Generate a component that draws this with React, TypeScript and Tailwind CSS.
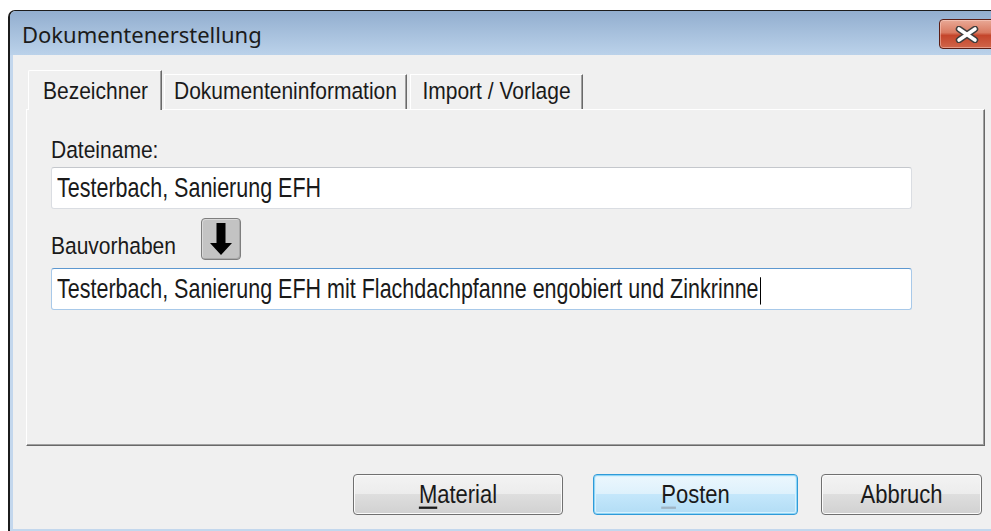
import type { ReactNode } from "react";

const tabs = [
  { label: "Bezeichner", cls: "w-[134px] h-[40px] ml-[2px] -mb-px relative z-10" },
  { label: "Dokumenteninformation", cls: "w-[243px] h-[35px] ml-[2px]" },
  { label: "Import / Vorlage", cls: "w-[173px] h-[35px] ml-[3px]" },
];

function Stretch({ children, className = "" }: { children: ReactNode; className?: string }) {
  return <span className={`inline-block scale-y-[1.15] ${className}`}>{children}</span>;
}

function CloseButton() {
  // runs past the right edge of the page, like a window pushed off screen
  return (
    <div className="ml-auto -mr-[8px] self-start mt-[8px] w-[60px] h-[30px] rounded-[4px] border border-[#5a1d14] bg-[linear-gradient(to_bottom,#e9a996_0%,#d97a61_45%,#c4452b_55%,#d0654a_100%)] shadow-[inset_0_0_0_1px_rgba(255,220,210,0.45)] flex items-center justify-center">
      <svg width="26" height="17" viewBox="0 0 26 17" className="-ml-[4px]">
        <path d="M5 3 L21 14 M21 3 L5 14" stroke="#3e3e3e" strokeWidth="6.5" strokeLinecap="round" />
        <path d="M5 3 L21 14 M21 3 L5 14" stroke="#ffffff" strokeWidth="3.6" strokeLinecap="round" />
      </svg>
    </div>
  );
}

function DialogButton({
  children,
  width,
  isDefault = false,
}: {
  children: ReactNode;
  width: string;
  isDefault?: boolean;
}) {
  const look = isDefault
    ? "border-[#2f9ad8] bg-[linear-gradient(to_bottom,#ecf7fd_0%,#ddf1fc_50%,#c4e7fb_50%,#b2ddf5_100%)] shadow-[inset_0_0_0_1px_#8fd5f6,inset_0_0_0_2px_#d8f1fd]"
    : "border-[#707070] bg-[linear-gradient(to_bottom,#f3f3f3_0%,#ececec_50%,#dedede_50%,#d1d1d1_100%)] shadow-[inset_0_0_0_1px_#fbfbfb]";
  return (
    <div className={`${width} h-[41px] rounded-[4px] border flex items-center justify-center text-[22px] text-[#1a1a1a] ${look}`}>
      <Stretch>{children}</Stretch>
    </div>
  );
}

function TextBox({ children, focused = false }: { children: ReactNode; focused?: boolean }) {
  const edge = focused
    ? "border-[#a8c9e9] border-t-[#5d98d0] bg-white"
    : "border-[#dadde2] border-t-[#c4c7cc] bg-white";
  return (
    <div className={`w-[861px] h-[42px] rounded-[3px] border flex items-center pl-[5px] text-[21.5px] text-[#1a1a1a] ${edge}`}>
      <span className="inline-block scale-y-[1.3] whitespace-nowrap">{children}</span>
    </div>
  );
}

export default function App() {
  return (
    <div className="w-[991px] h-[531px] overflow-hidden bg-white pt-[10px] pl-[8px] font-['Liberation_Sans',Arial,sans-serif] text-[21px] text-[#1a1a1a]">
      <div className="h-full flex flex-col rounded-tl-[7px] border-l-2 border-t border-[#1c1c1c] bg-[#c3d7ed]">
        {/* Title bar */}
        <div className="h-[44px] shrink-0 flex items-center rounded-tl-[6px] bg-[linear-gradient(to_bottom,#92aecf,#bbd2ea)] pl-[12px]">
          <span className="font-['Noto_Sans',sans-serif] text-[22px] leading-none text-[#1b1b1b] mt-[2px]">
            Dokumentenerstellung
          </span>
          <CloseButton />
        </div>

        {/* Client area */}
        <div className="flex-1 ml-[3px] mb-[2px] bg-[#f0f0f0] flex flex-col pt-[15px]">
          {/* Tabs */}
          <div className="ml-[13px] flex items-end h-[39px]">
            {tabs.map((tab, i) => (
              <div
                key={tab.label}
                className={`${tab.cls} bg-[#f0f0f0] border-l border-t border-r border-l-white border-t-white border-r-[#696969] shadow-[inset_-1px_0_0_#a0a0a0] ${
                  i === 0 ? "rounded-tl-[2px] pl-[14px]" : "justify-center"
                } flex items-center`}
              >
                <Stretch className={i === 0 ? "" : "mt-[-3px]"}>{tab.label}</Stretch>
              </div>
            ))}
          </div>

          {/* Tab page */}
          <div className="ml-[13px] mr-[6px] h-[337px] border border-l-white border-t-white border-r-[#696969] border-b-[#696969] shadow-[inset_-1px_-1px_0_#a0a0a0] pl-[24px] pt-[26px] flex flex-col">
            <div className="h-[28px] leading-[28px]">
              <Stretch>Dateiname:</Stretch>
            </div>
            <div className="mt-[3px]">
              <TextBox>Testerbach, Sanierung EFH</TextBox>
            </div>

            <div className="mt-[9px] h-[42px] flex items-end">
              <div className="h-[28px] leading-[28px]">
                <Stretch>Bauvorhaben</Stretch>
              </div>
              <div className="ml-[25px] w-[40px] h-[42px] rounded-[4px] border border-[#7e7e7e] bg-[#c3c3c3] shadow-[inset_1px_1px_0_#d9d9d9,inset_-1px_-1px_0_#a9a9a9] flex items-start justify-center">
                <svg width="24" height="34" viewBox="0 0 24 34" className="mt-[4px]">
                  <path d="M7.5 0 H16.5 V20 H23 L12 32 L1 20 H7.5 Z" fill="#000" />
                </svg>
              </div>
            </div>

            <div className="mt-[8px]">
              <TextBox focused>
                Testerbach, Sanierung EFH mit Flachdachpfanne engobiert und Zinkrinne
                <span className="inline-block w-px h-[21px] bg-black align-middle ml-px" />
              </TextBox>
            </div>
          </div>

          {/* Dialog buttons */}
          <div className="mt-[28px] flex justify-end pr-[9px]">
            <DialogButton width="w-[210px]">
              <span className="underline underline-offset-[3px]">M</span>aterial
            </DialogButton>
            <div className="ml-[30px]">
              <DialogButton width="w-[205px]" isDefault>
                <span className="underline underline-offset-[3px] decoration-[#9fb4c4]">P</span>osten
              </DialogButton>
            </div>
            <div className="ml-[23px]">
              <DialogButton width="w-[161px]">Abbruch</DialogButton>
            </div>
          </div>
        </div>
      </div>
    </div>
  );
}
